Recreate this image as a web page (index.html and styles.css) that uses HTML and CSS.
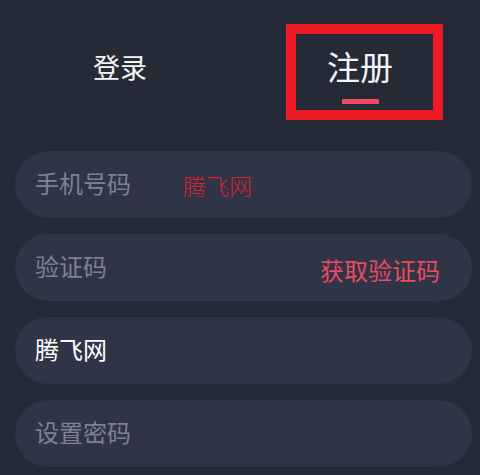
FILE: index.html
```html
<!DOCTYPE html>
<html lang="zh-CN">
<head>
    <meta charset="UTF-8">
    <meta name="viewport" content="width=device-width, initial-scale=1.0">
    <title>注册</title>
    <link rel="stylesheet" href="styles.css">
</head>
<body>
    <div class="page">
        <div class="tabs">
            <div class="tab">登录</div>
            <div class="tab active">
                <span class="tab-label">注册</span>
                <span class="tab-line"></span>
            </div>
        </div>

        <form class="form">
            <div class="field">
                <span class="placeholder">手机号码</span>
                <span class="watermark">腾飞网</span>
            </div>
            <div class="field">
                <span class="placeholder">验证码</span>
                <span class="code-btn">获取验证码</span>
            </div>
            <div class="field">
                <span class="value">腾飞网</span>
            </div>
            <div class="field">
                <span class="placeholder">设置密码</span>
            </div>
        </form>

        <div class="highlight"></div>
    </div>
</body>
</html>
```

FILE: styles.css
```css
* {
    margin: 0;
    padding: 0;
    box-sizing: border-box;
}

body {
    font-family: "Noto Sans CJK SC", "Noto Sans", sans-serif;
    background: #252a37;
    color: #fff;
    min-height: 100vh;
}

.page {
    position: relative;
    padding: 0 8px 0 15px;
}

.tabs {
    display: grid;
    grid-template-columns: 1fr 1fr;
    height: 151px;
    margin: 0 -8px 0 -15px;
}

.tab {
    display: flex;
    flex-direction: column;
    align-items: center;
    padding-top: 48px;
    font-size: 27px;
    line-height: 38px;
    color: #f4f5f7;
}

.tab.active {
    padding-top: 44px;
}

.tab-label {
    font-size: 33px;
    line-height: 45px;
}

.tab-line {
    width: 37px;
    height: 5px;
    margin-top: 10px;
    border-radius: 1px;
    background: #f04a64;
}

.form {
    display: flex;
    flex-direction: column;
    gap: 16px;
}

.field {
    position: relative;
    display: flex;
    align-items: center;
    justify-content: space-between;
    height: 67px;
    padding: 0 32px 4px 20px;
    border-radius: 34px;
    background: #2f3446;
    font-size: 24px;
}

.placeholder {
    color: #7c8296;
}

.value {
    color: #fff;
}

.code-btn {
    color: #ec4a61;
    margin-top: 8px;
}

/* site watermark laid over the phone field */
.watermark {
    position: absolute;
    left: 168px;
    top: 17px;
    font-size: 23px;
    font-weight: 300;
    color: #d9202f;
}

/* red frame around the active tab */
.highlight {
    position: absolute;
    left: 286px;
    top: 24px;
    width: 157px;
    height: 96px;
    border: 10px solid #ed1c24;
}
```
